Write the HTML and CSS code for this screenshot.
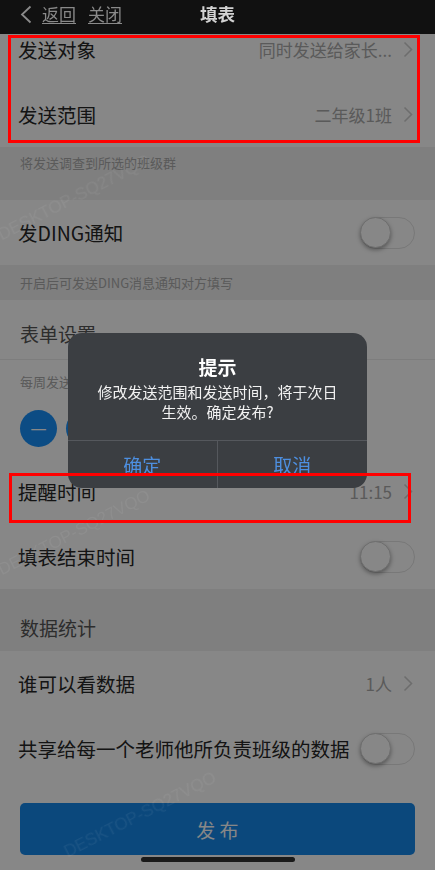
FILE: index.html
```html
<!DOCTYPE html>
<html lang="zh-CN">
<head>
    <meta charset="UTF-8">
    <meta name="viewport" content="width=device-width, initial-scale=1.0">
    <title>填表</title>
    <link rel="stylesheet" href="styles.css">
</head>
<body>

    <!-- Barra superior -->
    <header class="barra-superior">
        <div class="nav-izq">
            <svg class="nav-flecha" width="12" height="19" viewBox="0 0 12 19">
                <polyline points="10.5,1.5 2,9.5 10.5,17.5" fill="none" stroke="#8a8a8a" stroke-width="1.8"/>
            </svg>
            <a class="nav-link">返回</a>
            <a class="nav-link">关闭</a>
        </div>
        <div class="titulo">填表</div>
        <div></div>
    </header>

    <main class="pagina">
        <div class="fila">
            <span class="etiqueta">发送对象</span>
            <span class="valor">同时发送给家长...</span>
            <svg class="flecha" width="10" height="17" viewBox="0 0 10 17"><polyline points="1.5,1.5 8.5,8.5 1.5,15.5" fill="none" stroke="#cfcfcf" stroke-width="1.6"/></svg>
        </div>
        <div class="fila">
            <span class="etiqueta">发送范围</span>
            <span class="valor">二年级1班</span>
            <svg class="flecha" width="10" height="17" viewBox="0 0 10 17"><polyline points="1.5,1.5 8.5,8.5 1.5,15.5" fill="none" stroke="#cfcfcf" stroke-width="1.6"/></svg>
        </div>
        <div class="nota nota-alta">将发送调查到所选的班级群</div>

        <div class="fila">
            <span class="etiqueta">发DING通知</span>
            <span class="interruptor"></span>
        </div>
        <div class="nota">开启后可发送DING消息通知对方填写</div>

        <div class="cabecera">表单设置</div>
        <div class="semana">
            <div class="nota-semana">每周发送日期</div>
            <div class="dias">
                <span class="dia">一</span>
                <span class="dia">二</span>
                <span class="dia">三</span>
                <span class="dia">四</span>
                <span class="dia">五</span>
                <span class="dia">六</span>
                <span class="dia">日</span>
            </div>
        </div>
        <div class="fila">
            <span class="etiqueta">提醒时间</span>
            <span class="valor">11:15</span>
            <svg class="flecha" width="10" height="17" viewBox="0 0 10 17"><polyline points="1.5,1.5 8.5,8.5 1.5,15.5" fill="none" stroke="#cfcfcf" stroke-width="1.6"/></svg>
        </div>
        <div class="fila">
            <span class="etiqueta">填表结束时间</span>
            <span class="interruptor"></span>
        </div>

        <div class="seccion">数据统计</div>
        <div class="fila">
            <span class="etiqueta">谁可以看数据</span>
            <span class="valor">1人</span>
            <svg class="flecha" width="10" height="17" viewBox="0 0 10 17"><polyline points="1.5,1.5 8.5,8.5 1.5,15.5" fill="none" stroke="#cfcfcf" stroke-width="1.6"/></svg>
        </div>
        <div class="fila">
            <span class="etiqueta">共享给每一个老师他所负责班级的数据</span>
            <span class="interruptor"></span>
        </div>

        <div class="zona-boton">
            <div class="boton">发 布</div>
        </div>
    </main>

    <!-- Capa oscura con el aviso -->
    <div class="mascara">
        <div class="dialogo">
            <div class="dialogo-cuerpo">
                <div class="dialogo-titulo">提示</div>
                <div class="dialogo-texto">修改发送范围和发送时间，将于次日生效。确定发布?</div>
            </div>
            <div class="dialogo-botones">
                <span>确定</span>
                <span>取消</span>
            </div>
        </div>
    </div>

    <!-- Marcas rojas y marca de agua -->
    <div class="marca marca-envio"></div>
    <div class="marca marca-hora"></div>
    <span class="marca-agua agua-1">DESKTOP-SQ27VQO</span>
    <span class="marca-agua agua-2">DESKTOP-SQ27VQO</span>
    <span class="marca-agua agua-3">DESKTOP-SQ27VQO</span>

    <div class="indicador"></div>
</body>
</html>
```

FILE: styles.css
```css
body {
    margin: 0;
    padding: 0;
    width: 435px;
    height: 870px;
    overflow: hidden;
    position: relative;
    background-color: #fff;
    font-family: "Noto Sans CJK SC", "Noto Sans", sans-serif;
}

.barra-superior {
    position: fixed;
    top: 0;
    left: 0;
    right: 0;
    height: 34px;
    padding-bottom: 6px;
    box-sizing: border-box;
    background-color: #111;
    display: grid;
    grid-template-columns: 1fr auto 1fr;
    align-items: center;
    z-index: 20;
}

.nav-izq {
    display: flex;
    align-items: center;
    padding-left: 20px;
}

.nav-flecha {
    margin-right: 10px;
}

.nav-link {
    font-size: 17px;
    line-height: 22px;
    color: #8a8a8a;
    text-decoration: underline;
    text-underline-offset: 2px;
    margin-right: 12px;
}

.titulo {
    font-size: 17.5px;
    font-weight: 600;
    color: #d2d2d2;
    line-height: 22px;
}

.pagina {
    padding-top: 17px;
}

.fila {
    height: 65px;
    display: flex;
    align-items: center;
    padding: 0 20px 0 18px;
    background-color: #fff;
}

.etiqueta {
    flex: 1;
    font-size: 19.5px;
    color: #262626;
    white-space: nowrap;
}

.valor {
    font-size: 17px;
    color: #aaa;
    margin-right: 11px;
}

.flecha {
    margin-right: 2px;
}

.interruptor {
    width: 55px;
    height: 32px;
    border-radius: 16px;
    border: 1.5px solid #e2e2e2;
    box-sizing: border-box;
    position: relative;
    flex-shrink: 0;
    margin-left: -2px;
}

.interruptor::before {
    content: "";
    position: absolute;
    left: -1px;
    top: -1px;
    width: 31px;
    height: 31px;
    border-radius: 50%;
    background-color: #fff;
    border: 1px solid #d0d0d0;
    box-sizing: border-box;
    box-shadow: 0 2px 4px rgba(0, 0, 0, 0.35);
}

.nota {
    height: 35px;
    box-sizing: border-box;
    padding: 9px 20px 0;
    background-color: #f0f0f0;
    font-size: 13px;
    line-height: 18px;
    color: #aaa;
}

.nota-alta {
    height: 53px;
    padding-top: 7px;
}

.cabecera {
    height: 60px;
    box-sizing: border-box;
    padding: 8px 20px 0;
    display: flex;
    align-items: center;
    font-size: 19px;
    color: #555;
    border-bottom: 1px solid #ececec;
}

.semana {
    padding: 13px 20px 12px;
}

.nota-semana {
    font-size: 13px;
    line-height: 18px;
    color: #aaa;
}

.dias {
    display: flex;
    gap: 9px;
    margin-top: 19px;
}

.dia {
    width: 37px;
    height: 37px;
    border-radius: 50%;
    background-color: #1890fa;
    color: #fff;
    font-size: 16px;
    display: flex;
    align-items: center;
    justify-content: center;
}

.seccion {
    height: 62px;
    box-sizing: border-box;
    padding: 0 20px 10px;
    background-color: #f0f0f0;
    display: flex;
    align-items: flex-end;
    font-size: 19px;
    line-height: 26px;
    color: #555;
}

.zona-boton {
    padding: 22px 20px 0;
}

.boton {
    height: 52px;
    border-radius: 5px;
    background-color: #1688ea;
    color: #fff;
    font-size: 19px;
    display: flex;
    align-items: center;
    justify-content: center;
}

.mascara {
    position: fixed;
    top: 0;
    left: 0;
    right: 0;
    bottom: 0;
    background-color: rgba(0, 0, 0, 0.47);
    z-index: 10;
    display: flex;
    justify-content: center;
    align-items: flex-start;
    padding-top: 333px;
    box-sizing: border-box;
}

.dialogo {
    width: 299px;
    background-color: #3b3e42;
    border-radius: 14px;
    overflow: hidden;
    color: #fff;
    text-align: center;
}

.dialogo-cuerpo {
    padding: 22px 25px 18px;
}

.dialogo-titulo {
    font-size: 19px;
    font-weight: 600;
    line-height: 24px;
}

.dialogo-texto {
    margin-top: 3px;
    font-size: 15px;
    line-height: 20px;
    color: #f2f2f2;
}

.dialogo-botones {
    display: grid;
    grid-template-columns: 1fr 1fr;
    border-top: 1px solid #55585d;
}

.dialogo-botones span {
    height: 47px;
    display: flex;
    align-items: center;
    justify-content: center;
    font-size: 19px;
    color: #4d8fe0;
}

.dialogo-botones span:first-child {
    border-right: 1px solid #55585d;
}

.marca {
    position: absolute;
    border: 3px solid #f00;
    box-sizing: border-box;
    z-index: 30;
}

.marca-envio {
    left: 8px;
    top: 35px;
    width: 412px;
    height: 108px;
}

.marca-hora {
    left: 9px;
    top: 473px;
    width: 402px;
    height: 50px;
}

.marca-agua {
    position: absolute;
    z-index: 25;
    font-family: "Liberation Sans", sans-serif;
    font-size: 17px;
    color: rgba(255, 255, 255, 0.06);
    transform: rotate(-27deg);
    transform-origin: left bottom;
    white-space: nowrap;
}

.agua-1 {
    left: 4px;
    top: 225px;
}

.agua-2 {
    left: 4px;
    top: 560px;
}

.agua-3 {
    left: 70px;
    top: 842px;
}

.indicador {
    position: fixed;
    left: 0;
    right: 0;
    bottom: 8px;
    margin: 0 auto;
    width: 154px;
    height: 5px;
    border-radius: 3px;
    background-color: #1a1a1a;
    z-index: 40;
}
```
